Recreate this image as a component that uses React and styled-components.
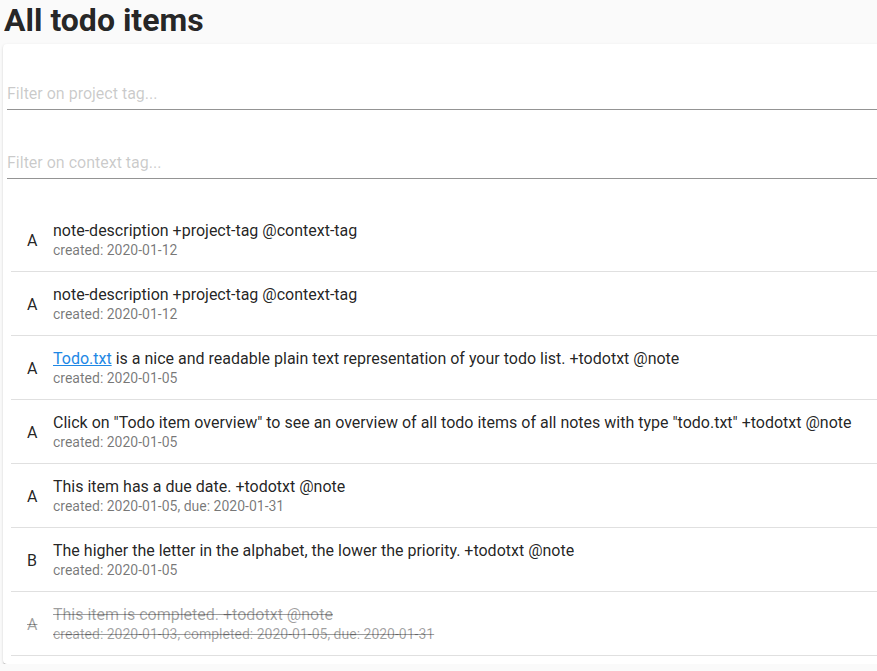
import React from 'react';
import styled, { createGlobalStyle } from 'styled-components';

const GlobalStyle = createGlobalStyle`
  html, body {
    margin: 0;
    padding: 0;
    background: #fafafa;
    font-family: Roboto, "Liberation Sans", sans-serif;
    color: rgba(0, 0, 0, 0.87);
  }
`;

const Page = styled.div`
  padding: 0 0 0 3px;
  overflow: hidden;
`;

const Title = styled.h1`
  margin: 0;
  padding: 0 0 4px 1px;
  font-size: 32px;
  font-weight: 700;
  line-height: 40px;
  color: rgba(0, 0, 0, 0.87);
`;

const Card = styled.div`
  background: #fff;
  margin-right: -4px;
  padding: 5px 4px 8px 4px;
  box-shadow: 0 2px 1px -1px rgba(0, 0, 0, 0.2), 0 1px 1px 0 rgba(0, 0, 0, 0.14),
    0 1px 3px 0 rgba(0, 0, 0, 0.12);
  border-radius: 4px;
`;

const Field = styled.div`
  padding-top: 28px;
  margin-bottom: 8px;
`;

const Input = styled.input`
  display: block;
  width: 100%;
  box-sizing: border-box;
  border: 0;
  border-bottom: 1px solid rgba(0, 0, 0, 0.42);
  outline: none;
  background: transparent;
  font-family: inherit;
  font-size: 16px;
  line-height: 19px;
  padding: 7px 0 6px;
  color: rgba(0, 0, 0, 0.87);

  &::placeholder {
    color: rgba(0, 0, 0, 0.42);
    opacity: 0.5;
  }
`;

const List = styled.ul`
  list-style: none;
  margin: 29px 0 0 4px;
  padding: 0;
`;

const Item = styled.li`
  display: flex;
  align-items: center;
  padding: 12px 16px 12px;
  border-bottom: 1px solid rgba(0, 0, 0, 0.12);
  color: ${p => (p.done ? 'rgba(0, 0, 0, 0.38)' : 'rgba(0, 0, 0, 0.87)')};
  text-decoration: ${p => (p.done ? 'line-through' : 'none')};
`;

const Priority = styled.span`
  width: 26px;
  flex-shrink: 0;
  font-size: 16px;
  padding-top: 2px;
`;

const Body = styled.div`
  display: flex;
  flex-direction: column;
  min-width: 0;
`;

const Primary = styled.span`
  font-size: 16px;
  line-height: 21px;
  white-space: nowrap;
`;

const Secondary = styled.span`
  font-size: 14px;
  line-height: 18px;
  color: ${p => (p.done ? 'rgba(0, 0, 0, 0.38)' : 'rgba(0, 0, 0, 0.54)')};
  white-space: nowrap;
`;

const Link = styled.a`
  color: #1e88e5;
  text-decoration: underline;
`;

const todos = [
  { p: 'A', text: 'note-description +project-tag @context-tag', meta: 'created: 2020-01-12' },
  { p: 'A', text: 'note-description +project-tag @context-tag', meta: 'created: 2020-01-12' },
  {
    p: 'A',
    link: 'Todo.txt',
    text: ' is a nice and readable plain text representation of your todo list. +todotxt @note',
    meta: 'created: 2020-01-05',
  },
  {
    p: 'A',
    text: 'Click on "Todo item overview" to see an overview of all todo items of all notes with type "todo.txt" +todotxt @note',
    meta: 'created: 2020-01-05',
  },
  { p: 'A', text: 'This item has a due date. +todotxt @note', meta: 'created: 2020-01-05, due: 2020-01-31' },
  { p: 'B', text: 'The higher the letter in the alphabet, the lower the priority. +todotxt @note', meta: 'created: 2020-01-05' },
  {
    p: 'A',
    text: 'This item is completed. +todotxt @note',
    meta: 'created: 2020-01-03, completed: 2020-01-05, due: 2020-01-31',
    done: true,
  },
];

const App = () => (
  <Page>
    <GlobalStyle />
    <Title>All todo items</Title>
    <Card>
      <Field>
        <Input placeholder="Filter on project tag..." />
      </Field>
      <Field>
        <Input placeholder="Filter on context tag..." />
      </Field>
      <List>
        {todos.map((t, i) => (
          <Item key={i} done={t.done}>
            <Priority>{t.p}</Priority>
            <Body>
              <Primary>
                {t.link && <Link href="#">{t.link}</Link>}
                {t.text}
              </Primary>
              <Secondary done={t.done}>{t.meta}</Secondary>
            </Body>
          </Item>
        ))}
      </List>
    </Card>
  </Page>
);

export default App;
